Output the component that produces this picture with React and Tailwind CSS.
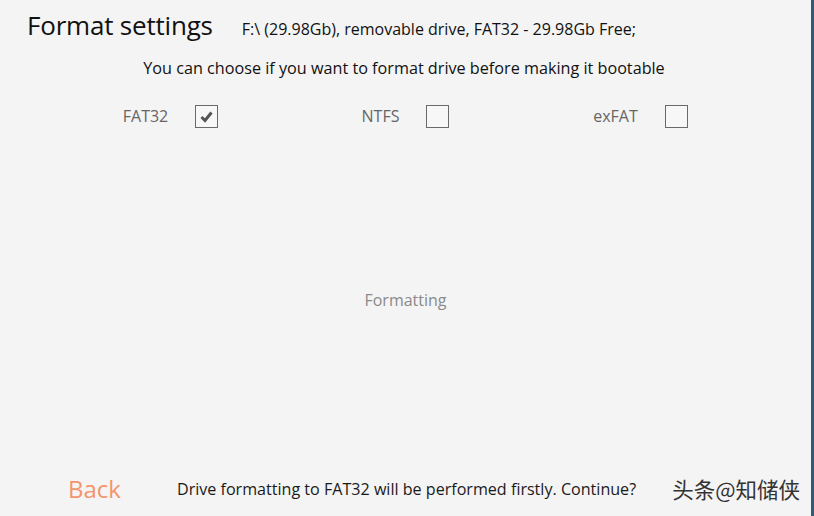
import React from 'react';

const font = { fontFamily: '"Open Sans", "Noto Sans", sans-serif' };

function Option({ label, checked }) {
  return (
    <div className="flex items-center justify-center gap-[27px]">
      <span className="text-[16px] text-[#666666]">{label}</span>
      <span className="w-[23px] h-[23px] border border-[#6a6a6a] bg-[#f7f7f7] flex items-center justify-center">
        {checked && (
          <svg width="15" height="13" viewBox="0 0 15 13">
            <path d="M2.5 7 L6 10.5 L12.5 2.5" fill="none" stroke="#555" strokeWidth="3" strokeLinecap="butt" strokeLinejoin="miter" />
          </svg>
        )}
      </span>
    </div>
  );
}

export default function App() {
  return (
    <div
      className="w-[814px] h-[516px] bg-[#f4f4f4] flex flex-col border-r-[3px] border-[#2f5b7a] overflow-hidden"
      style={font}
    >
      <div className="flex items-baseline pl-[27px] pt-[6px]">
        <h1 className="text-[26px] text-[#111] font-normal tracking-[-0.2px]">Format settings</h1>
        <span className="ml-[29px] text-[16px] text-[#111]">F:\ (29.98Gb), removable drive, FAT32 - 29.98Gb Free;</span>
      </div>
      <p className="text-center text-[16.2px] text-[#111] mt-[11px] pr-[3px]">
        You can choose if you want to format drive before making it bootable
      </p>
      <div className="grid grid-cols-3 px-[53px] mt-[24px]">
        <Option label="FAT32" checked />
        <Option label="NTFS" />
        <Option label="exFAT" />
      </div>
      <div className="flex-1 flex items-center justify-center pt-[6px]">
        <span className="text-[16px] text-[#8a8a8a]">Formatting</span>
      </div>
      <div className="flex items-center h-[50px] pb-[4px]">
        <span className="ml-[68px] text-[24px] text-[#f4946c]">Back</span>
        <span className="ml-[56px] text-[16.1px] text-[#1a1a1a]">Drive formatting to FAT32 will be performed firstly. Continue?</span>
        <span
          className="ml-auto mr-[11px] text-[21.5px] text-[#333]"
          style={{ fontFamily: '"Noto Sans CJK SC", sans-serif' }}
        >
          头条@知储侠
        </span>
      </div>
    </div>
  );
}
